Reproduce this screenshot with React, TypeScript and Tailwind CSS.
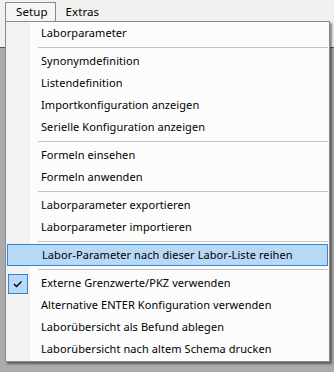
import React from "react";

type Entry = { t: "item"; label: string; hot?: boolean; checked?: boolean } | { t: "sep" };

const entries: Entry[] = [
  { t: "item", label: "Laborparameter" },
  { t: "sep" },
  { t: "item", label: "Synonymdefinition" },
  { t: "item", label: "Listendefinition" },
  { t: "item", label: "Importkonfiguration anzeigen" },
  { t: "item", label: "Serielle Konfiguration anzeigen" },
  { t: "sep" },
  { t: "item", label: "Formeln einsehen" },
  { t: "item", label: "Formeln anwenden" },
  { t: "sep" },
  { t: "item", label: "Laborparameter exportieren" },
  { t: "item", label: "Laborparameter importieren" },
  { t: "sep" },
  { t: "item", label: "Labor-Parameter nach dieser Labor-Liste reihen", hot: true },
  { t: "sep" },
  { t: "item", label: "Externe Grenzwerte/PKZ verwenden", checked: true },
  { t: "item", label: "Alternative ENTER Konfiguration verwenden" },
  { t: "item", label: "Laborübersicht als Befund ablegen" },
  { t: "item", label: "Laborübersicht nach altem Schema drucken" },
];

export default function App() {
  return (
    <div
      className="relative w-[334px] h-[372px] bg-[#ababab] overflow-hidden text-[11px] tracking-[0.08px] text-black"
      style={{ fontFamily: '"Noto Sans", "Open Sans", sans-serif' }}
    >
      <div className="h-[21px] bg-[#f0f0f0] flex items-end pl-[5px] text-[11.5px]">
        <div className="relative z-20 h-[19px] pl-[10px] pr-[7px] border border-b-0 border-[#8a8a8a] bg-[#f5f5f5] flex items-center leading-none">
          Setup
        </div>
        <div className="h-[19px] pl-[10px] pr-[8px] flex items-center leading-none">Extras</div>
      </div>
      <div className="h-[27px] bg-[#f0f0f0] border-b border-[#5a5a5a]" />

      <div className="absolute left-[5px] top-[21px] w-[325px] border border-[#8a8a8a] bg-[#fcfcfc] pb-[1px] shadow-[2px_2px_2px_rgba(0,0,0,0.45)] z-10">
        <div className="absolute left-0 top-0 bottom-0 w-[24px] bg-[#f2f2f2]" />
        {entries.map((e, i) =>
          e.t === "sep" ? (
            <div key={i} className="relative h-[6px] flex items-center pl-[32px] pr-[1px]">
              <div className="h-px w-full bg-[#c4c4c4]" />
            </div>
          ) : (
            <div
              key={i}
              className={
                "relative h-[22px] mx-[1px] flex items-center pl-[34px] whitespace-nowrap " +
                (e.hot ? "bg-[#b7d9f5] border border-[#2f86d8] pl-[33px]" : "")
              }
            >
              {e.checked && (
                <div className="absolute left-[1px] top-[2px] w-[20px] h-[20px] bg-[#b7d9f5] border border-[#2f86d8] flex items-center justify-center">
                  <svg width="10" height="8" viewBox="0 0 10 8">
                    <path d="M1 4 L3.5 6.5 L8.5 1.5" fill="none" stroke="#000" strokeWidth="1.4" />
                  </svg>
                </div>
              )}
              <span className="relative">{e.label}</span>
            </div>
          )
        )}
      </div>
    </div>
  );
}
